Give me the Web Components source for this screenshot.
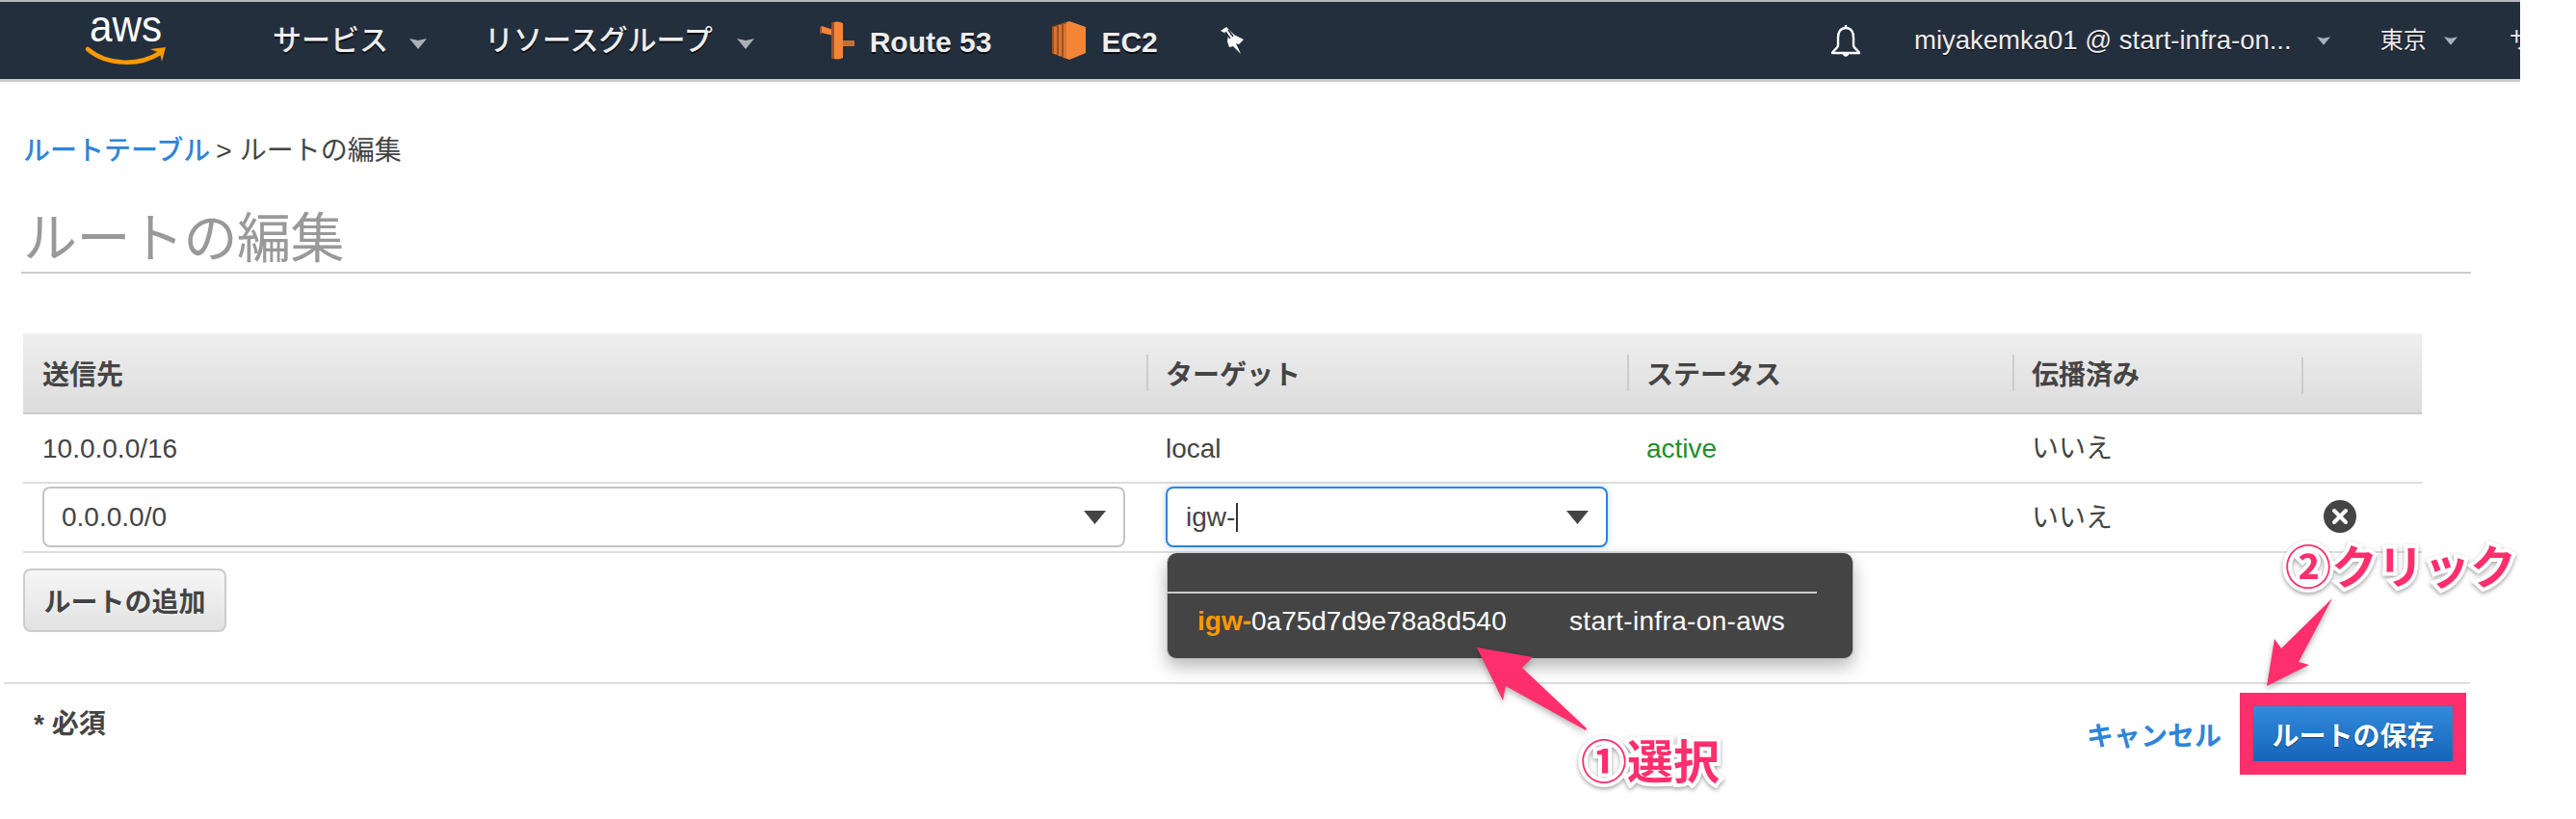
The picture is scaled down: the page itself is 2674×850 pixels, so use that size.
<!DOCTYPE html>
<html lang="ja">
<head>
<meta charset="utf-8">
<title>ルートの編集</title>
<style>
  html, body { margin: 0; background: #fff; }
  body {
    font-family: "Liberation Sans", "Noto Sans CJK JP", sans-serif;
    font-size: 28px;
    color: #444;
  }
  .orange { color: #f90; font-weight: 700; }
</style>
</head>
<body>

<route-page>
  <aws-nav>
    <nav-item caret style="margin-left:110px">サービス</nav-item>
    <nav-item caret style="margin-left:60px;--caret-gap:25px">リソースグループ</nav-item>
    <nav-item shortcut style="margin-left:68px"><route53-icon slot="icon"></route53-icon>Route 53</nav-item>
    <nav-item shortcut style="margin-left:63px"><ec2-icon slot="icon"></ec2-icon>EC2</nav-item>
    <pin-icon style="margin-left:65px"></pin-icon>
    <nav-side slot="side">
      <bell-icon></bell-icon>
      <nav-item small caret style="margin-left:55px;font-size:27.5px;--caret-gap:26px">miyakemka01 @ start-infra-on...</nav-item>
      <nav-item small caret style="margin-left:52px;--caret-gap:18px">東京</nav-item>
      <nav-item small style="margin-left:54px">サポート</nav-item>
    </nav-side>
  </aws-nav>

  <page-head>
    <a slot="crumb">ルートテーブル</a>
    ルートの編集
  </page-head>

  <route-table>
    <route-row head>
      <route-cell>送信先</route-cell>
      <route-cell sep>ターゲット</route-cell>
      <route-cell sep>ステータス</route-cell>
      <route-cell sep>伝播済み</route-cell>
      <route-cell sep></route-cell>
    </route-row>
    <route-row>
      <route-cell>10.0.0.0/16</route-cell>
      <route-cell>local</route-cell>
      <route-cell><span style="color:#1d8f2e">active</span></route-cell>
      <route-cell>いいえ</route-cell>
      <route-cell></route-cell>
    </route-row>
    <route-row>
      <route-cell><route-select style="margin-right:2px">0.0.0.0/0</route-select></route-cell>
      <route-cell>
        <route-select focused>igw-</route-select>
        <suggest-menu>
          <span slot="id"><span class="orange">igw-</span>0a75d7d9e78a8d540</span>
          <span slot="name">start-infra-on-aws</span>
        </suggest-menu>
      </route-cell>
      <route-cell></route-cell>
      <route-cell>いいえ</route-cell>
      <route-cell><remove-icon></remove-icon></route-cell>
    </route-row>
  </route-table>

  <aws-button style="margin:16px 0 0 24px">ルートの追加</aws-button>

  <form-footer>
    <span slot="note">* 必須</span>
    <a slot="cancel">キャンセル</a>
    <aws-button primary>ルートの保存</aws-button>
  </form-footer>

  <call-out style="left:1641px;top:759px">①選択</call-out>
  <call-out style="left:2372px;top:557px">②クリック</call-out>
  <call-arrows></call-arrows>
</route-page>

<script>
// liten hjälpare, varje element får sin egen template
function component(name, html) {
    const template = document.createElement('template');
    template.innerHTML = html;

    customElements.define(name, class extends HTMLElement {
        constructor() {
            super();
            this.attachShadow({mode: 'open'});
            this.shadowRoot.appendChild(template.content.cloneNode(true));
        }
    });
}

component('route-page', `
    <style>
        :host { display: block; position: relative; width: 2674px; height: 850px; overflow: hidden; }
    </style>
    <slot></slot>
`);

// navbar

component('aws-nav', `
    <style>
        :host {
            display: flex; align-items: center; box-sizing: border-box;
            width: 2616px; height: 85px;
            background: #242f3e;
            border-top: 2px solid #b4b8bd; border-bottom: 3px solid #ccc;
            color: #eee;
        }
        svg { flex: none; margin-left: 90px; overflow: visible; }
        .side { margin-left: auto; flex: none; width: 716px; overflow: hidden; }
    </style>
    <svg width="83" height="80" viewBox="0 0 83 80">
        <text x="3" y="41" font-family="'Liberation Sans', sans-serif" font-size="47" fill="#fff" textLength="75" lengthAdjust="spacingAndGlyphs">aws</text>
        <path d="M1 49 C22 67 56 66 76 53" fill="none" stroke="#f90" stroke-width="4.5" stroke-linecap="round"/>
        <path d="M66 49 L82 47 L78 62 L76 53 Z" fill="#f90"/>
    </svg>
    <slot></slot>
    <div class="side"><slot name="side"></slot></div>
`);

component('nav-side', `
    <style>
        :host { display: flex; align-items: center; white-space: nowrap; }
    </style>
    <slot></slot>
`);

component('nav-item', `
    <style>
        :host {
            display: inline-flex; align-items: center; flex: none; white-space: nowrap;
            font-size: 30px; font-weight: 500; line-height: 40px;
            text-shadow: 0 2px 0 rgba(0,0,0,.75);
        }
        :host([small]) { font-size: 24px; font-weight: 400; text-shadow: 0 1px 0 #000; }
        :host([shortcut]) { font-weight: 700; padding-top: 4px; }
        ::slotted([slot=icon]) { margin-right: 16px; margin-top: -4px; }
        svg { display: none; margin-left: var(--caret-gap, 22px); margin-top: 6px; }
        :host([small]) svg { margin-top: 0; width: 14px; height: 9px; }
        :host([caret]) svg { display: block; }
    </style>
    <slot name="icon"></slot>
    <slot></slot>
    <svg width="18" height="11" viewBox="0 0 18 11"><path d="M0 0 L9 2 L18 0 L9 11 Z" fill="#aab0b6"/></svg>
`);

component('route53-icon', `
    <style>:host { display: block; width: 36px; height: 40px; } svg { display: block; }</style>
    <svg width="36" height="40" viewBox="0 0 36 40">
        <path d="M0 7 L2 5 L14 9 V15 L2 12 L0 13 Z" fill="#f58536"/>
        <path d="M20 20 H36 V26 H20 Z" fill="#c96f2d"/>
        <path d="M12 2 Q18 -1 24 2 V38 Q18 41 12 38 Z" fill="#f58536"/>
        <path d="M12 2 Q14 1 15 1 V39 Q14 39 12 38 Z M0 7 L2 5 V12 L0 13 Z" fill="#9d5025"/>
    </svg>
`);

component('ec2-icon', `
    <style>:host { display: block; width: 35px; height: 40px; } svg { display: block; }</style>
    <svg width="35" height="40" viewBox="0 0 35 40">
        <path d="M0 6 L18 0 L35 6 V33 L18 40 L0 33 Z" fill="#f58536"/>
        <path d="M0 6 L18 0 V40 L0 33 Z" fill="#9d5025"/>
        <path d="M2 6 H5 V34 H2 Z M7 4 H10 V36 H7 Z M12 3 H18 V38 H12 Z" fill="#d9752f"/>
        <path d="M15 1 H18 V39 H15 Z" fill="#f58536"/>
    </svg>
`);

component('pin-icon', `
    <style>:host { display: block; flex: none; width: 24px; height: 28px; margin-top: -1px; } svg { display: block; }</style>
    <svg width="24" height="28" viewBox="0 0 24 28">
        <path d="M0 4 L6 0 L14 8 L24 13 L19 18 L16 17 L21 28 L13 20 L9 21 L7 15 L8 8 Z" fill="#fff"/>
        <path d="M5 5 L10 12 M8 3 L13 10" stroke="#242f3e" stroke-width="1.5"/>
    </svg>
`);

component('bell-icon', `
    <style>:host { display: block; flex: none; width: 32px; height: 36px; margin-top: 2px; } svg { display: block; }</style>
    <svg width="32" height="36" viewBox="0 0 32 36" fill="none" stroke="#fff" stroke-width="2.4">
        <path d="M16 1 V4 M16 4 C10 4 8 9 8 14 V22 C8 25 3 27 2 30 H30 C29 27 24 25 24 22 V14 C24 9 22 4 16 4 Z" stroke-linejoin="round"/>
        <path d="M12.5 30 C13 35 19 35 19.5 30" fill="#fff" stroke="none"/>
    </svg>
`);

// rubrik

component('page-head', `
    <style>
        :host { display: block; padding: 56px 0 0 24px; }
        .crumb { font-size: 28px; line-height: 32px; white-space: nowrap; color: #444; }
        ::slotted(a) { color: #2f85d8; font-weight: 500; }
        .sep { margin: 0 8px 0 6px; }
        h1 {
            margin: 43px 109px 0 -2px; padding: 0 0 2px 2px;
            font-size: 56px; font-weight: 400; line-height: 64px; color: #999;
            letter-spacing: -.5px;
            border-bottom: 2px solid #ccc;
        }
    </style>
    <div class="crumb"><slot name="crumb"></slot><span class="sep">&gt;</span>ルートの編集</div>
    <h1><slot></slot></h1>
`);

// tabell

component('route-table', `
    <style>
        :host { display: block; margin: 62px 0 0 24px; width: 2490px; --cols: 1166px 499px 400px 300px 125px; }
    </style>
    <slot></slot>
`);

component('route-row', `
    <style>
        :host {
            display: grid; grid-template-columns: var(--cols); align-items: center;
            box-sizing: border-box; height: 72px;
            border-bottom: 2px solid #ddd;
            --cell-top: 2px;
        }
        :host([head]) {
            height: 84px;
            background: linear-gradient(#efefef, #dcdcdc);
            border-bottom: 2px solid #ccc;
            font-weight: 700;
            --cell-top: 6px;
        }
    </style>
    <slot></slot>
`);

component('route-cell', `
    <style>
        :host {
            display: block; position: relative; box-sizing: border-box;
            padding: var(--cell-top) 20px 0; min-height: 40px; line-height: 40px; white-space: nowrap;
        }
        :host([sep])::before {
            content: ""; position: absolute; left: 0; top: 4px; width: 2px; height: 38px; background: #ccc;
        }
    </style>
    <slot></slot>
`);

component('route-select', `
    <style>
        :host {
            display: flex; align-items: center; box-sizing: border-box; height: 63px; margin-top: -3px;
            padding: 0 18px; background: #fff;
            border: 2px solid #c4c4c4; border-radius: 8px;
        }
        :host([focused]) { border-color: #2f85d8; box-shadow: 0 0 6px rgba(47,133,216,.35); padding-left: 19px; }
        i { display: none; width: 2px; height: 30px; background: #333; margin-left: 1px; }
        :host([focused]) i { display: block; }
        svg { margin-left: auto; flex: none; }
    </style>
    <slot></slot><i></i>
    <svg width="23" height="14" viewBox="0 0 23 14"><path d="M0 0 H23 L11.5 14 Z" fill="#444"/></svg>
`);

component('suggest-menu', `
    <style>
        :host {
            display: block; position: absolute; left: 21px; top: 68px; width: 713px; height: 110px;
            box-sizing: border-box; background: #444; color: #fff; border-radius: 10px;
            border: 1px solid #bbb; border-top: none;
            box-shadow: 0 8px 18px rgba(0,0,0,.28); z-index: 2;
        }
        .line { height: 2px; width: 674px; margin-top: 40px; background: #ccc; }
        .row { display: flex; padding: 9px 0 0 31px; line-height: 40px; }
        .id { width: 386px; }
        .name { letter-spacing: .35px; }
    </style>
    <div class="line"></div>
    <div class="row">
        <div class="id"><slot name="id"></slot></div>
        <div class="name"><slot name="name"></slot></div>
    </div>
`);

component('remove-icon', `
    <style>:host { display: block; width: 34px; margin: 0 0 0 3px; } svg { display: block; }</style>
    <svg width="34" height="34" viewBox="0 0 34 34">
        <circle cx="17" cy="17" r="17" fill="#444"/>
        <path d="M11 11 L23 23 M23 11 L11 23" stroke="#fff" stroke-width="4" stroke-linecap="round"/>
    </svg>
`);

// knappar och footer

component('aws-button', `
    <style>
        :host {
            display: inline-flex; align-items: center; justify-content: center; box-sizing: border-box;
            width: 211px; height: 66px; border-radius: 8px;
            background: linear-gradient(#f6f6f6, #e2e2e2);
            border: 2px solid #ccc; font-weight: 700;
            text-shadow: 0 1px 0 #fff;
        }
        :host([primary]) {
            width: 207px; height: 57px; border: none; border-radius: 0;
            background: linear-gradient(#338adc, #1565ba);
            color: #fff; text-shadow: 0 1px 1px rgba(0,0,0,.5);
            box-shadow: 0 0 0 14px #ff2e6c;
        }
    </style>
    <slot></slot>
`);

component('form-footer', `
    <style>
        :host {
            display: flex; align-items: flex-start; box-sizing: border-box;
            margin: 52px 110px 0 4px; height: 100px; padding: 23px 18px 0 31px;
            border-top: 2px solid #ddd; font-weight: 700;
        }
        .note { margin-right: auto; margin-top: 1px; line-height: 36px; }
        .cancel { margin: 14px 33px 0 0; line-height: 36px; }
        ::slotted(a) { color: #2f85d8; }
    </style>
    <div class="note"><slot name="note"></slot></div>
    <div class="cancel"><slot name="cancel"></slot></div>
    <slot></slot>
`);

// anteckningar ovanpå skärmbilden

component('call-out', `
    <style>
        :host {
            display: block; position: absolute; z-index: 5; white-space: nowrap;
            font-size: 48px; font-weight: 700; line-height: 66px; color: #ff2e6c;
            -webkit-text-stroke: 8px #fff; paint-order: stroke fill;
            filter: drop-shadow(0 2px 2px rgba(0,0,0,.35));
        }
    </style>
    <slot></slot>
`);

component('call-arrows', `
    <style>
        :host { display: block; position: absolute; left: 0; top: 0; z-index: 4; pointer-events: none; }
        svg { display: block; filter: drop-shadow(0 3px 3px rgba(0,0,0,.3)); }
    </style>
    <svg width="2674" height="850" viewBox="0 0 2674 850">
        <path d="M1533 672 L1591 682 L1580 693 L1647 756 L1646 758 L1563 712 L1560 727 Z" fill="#ff2e6c"/>
        <path d="M2353 712 L2361 663 L2368 673 L2421 621 L2386 687 L2397 690 Z" fill="#ff2e6c"/>
    </svg>
`);
</script>
</body>
</html>
